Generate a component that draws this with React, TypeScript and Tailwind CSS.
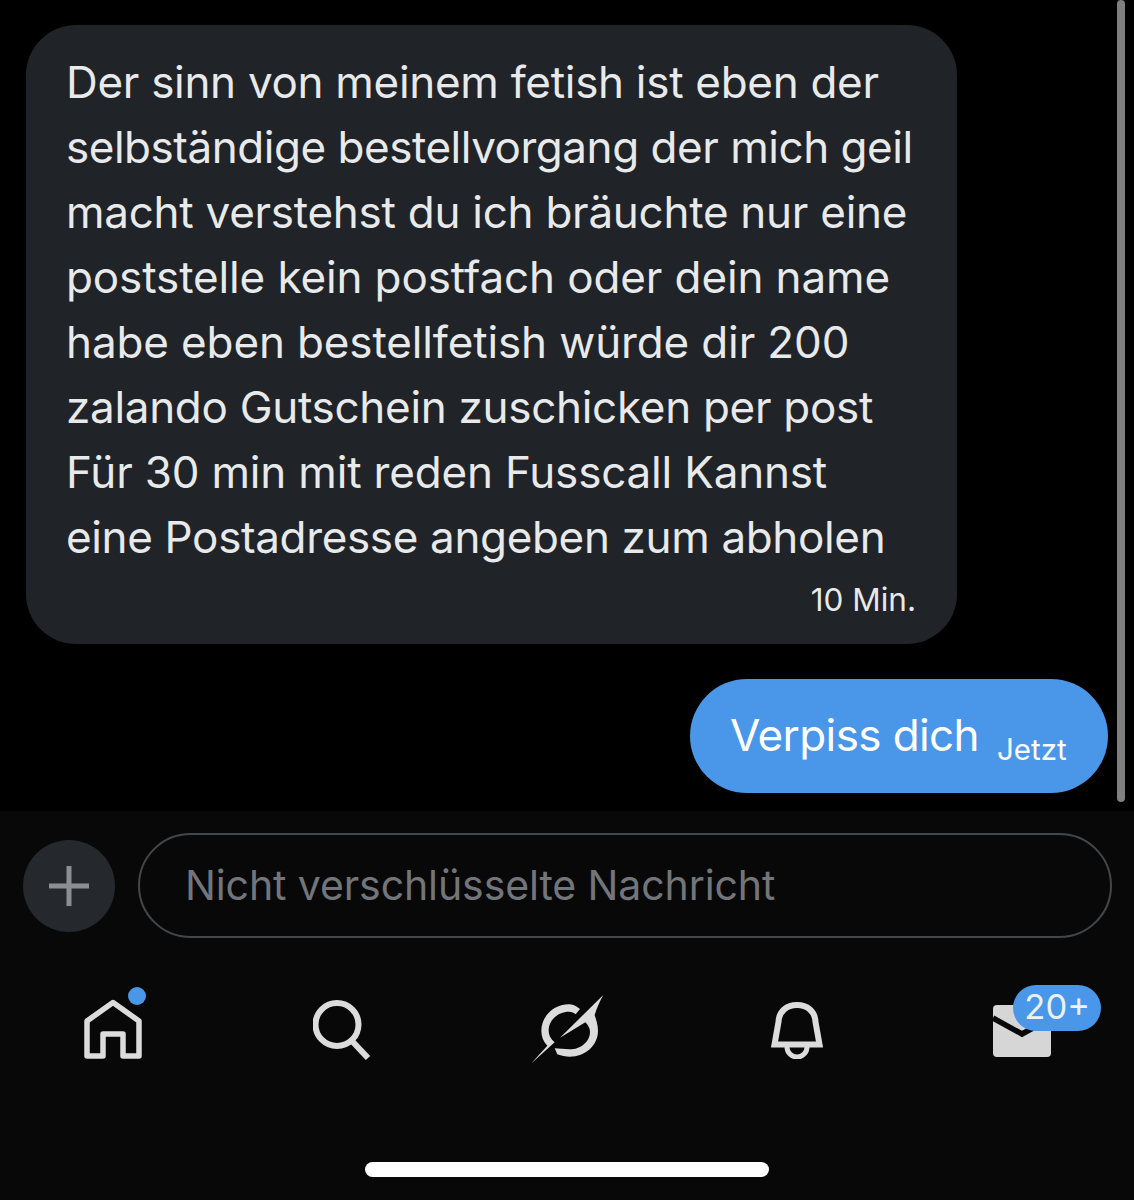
export default function App() {
  const lines = [
    { t: "Der sinn von meinem fetish ist eben der", c: "tracking-[-0.3px]" },
    { t: "selbständige bestellvorgang der mich geil", c: "tracking-[-0.47px]" },
    { t: "macht verstehst du ich bräuchte nur eine", c: "tracking-[-0.27px]" },
    { t: "poststelle kein postfach oder dein name", c: "tracking-[-0.12px]" },
    { t: "habe eben bestellfetish würde dir 200", c: "tracking-[-0.13px]" },
    { t: "zalando Gutschein zuschicken per post", c: "tracking-[-0.3px]" },
    { t: "Für 30 min mit reden Fusscall Kannst", c: "tracking-[-0.18px]" },
    { t: "eine Postadresse angeben zum abholen", c: "tracking-[-0.35px]" },
  ];
  return (
    <div className="relative flex h-[1200px] w-[1134px] flex-col overflow-hidden bg-black font-['Inter',sans-serif] text-[#e7e9ea]">
      <div className="absolute left-[1117px] top-0 h-[802px] w-[8px] rounded-full bg-[#7f7f7f]" />
      <main className="flex h-[811px] shrink-0 flex-col pl-[26px] pr-[26px] pt-[25px]">
        <div className="w-[931px] rounded-[50px] bg-[#202327] pl-[40px] pr-[41px] pt-[25px] pb-[24px]">
          {lines.map((l) => (
            <p key={l.t} className={`whitespace-nowrap text-[44px] leading-[65px] ${l.c}`}>{l.t}</p>
          ))}
          <p className="mt-[10px] text-right text-[31.5px] leading-[40px]">10 Min.</p>
        </div>
        <div className="mt-[35px] flex h-[114px] w-[418px] items-center self-end rounded-[57px] bg-[#4a96e8] pl-[40px] text-white">
          <span className="mt-[-2px] whitespace-nowrap text-[44px] leading-[65px] tracking-[-0.6px]">Verpiss dich</span>
          <span className="ml-[18px] mt-[26px] whitespace-nowrap text-[29.5px] leading-[36px]">Jetzt</span>
        </div>
      </main>
      <footer className="flex flex-1 flex-col bg-[#080808]">
        <div className="mt-[22px] flex items-center pl-[23px] pr-[22px]">
          <button className="flex h-[92px] w-[92px] shrink-0 items-center justify-center rounded-full bg-[#25292d]">
            <svg width="40" height="40" viewBox="0 0 40 40" fill="none" stroke="#8b8f93" strokeWidth="5">
              <path d="M20 0V40M0 20H40" />
            </svg>
          </button>
          <div className="ml-[23px] flex h-[105px] flex-1 items-center rounded-[53px] border-2 border-[#44474a] pl-[45px]">
            <span className="whitespace-nowrap text-[41px] tracking-[-0.1px] text-[#72767a]">Nicht verschlüsselte Nachricht</span>
          </div>
        </div>
        <nav className="mt-[52px] grid grid-cols-5">
          <div className="relative flex h-[80px] items-center justify-center">
            <svg width="58" height="60" viewBox="0 0 58 60" fill="none" stroke="#dcdcdc" strokeWidth="5.5" strokeLinejoin="round" className="mt-[-3px]">
              <path d="M29 3.5L55 22V57H39V35H19V57H3V22Z" />
            </svg>
            <span className="absolute left-[128px] top-[-3px] h-[18px] w-[18px] rounded-full bg-[#4a96e8]" />
          </div>
          <div className="flex h-[80px] items-center justify-center">
            <svg width="58" height="60" viewBox="0 0 58 60" fill="none" stroke="#dcdcdc" strokeWidth="6" className="ml-[3px] mt-[-1px]">
              <circle cx="24" cy="24.5" r="21.5" />
              <path d="M39 41L55 58" />
            </svg>
          </div>
          <div className="flex h-[80px] items-center justify-center">
            <svg width="71" height="69" viewBox="24 30 213 207" fill="#dcdcdc" className="ml-[1px] mt-[-1px]">
              <path d="M168 72C155 62 145 58 135 58C88 58 52 95 52 137C52 155 58 170 70 182L22 235L92 172C80 162 74 150 74 137C74 105 102 80 135 80C143 80 150 83 155 88Z" />
              <path d="M238 30L108 158L184 112C192 120 198 130 198 140C198 170 170 193 137 193C120 193 105 190 92 190L100 208C112 213 125 215 137 215C185 215 222 180 222 137C222 118 215 100 212 90C218 70 228 48 238 30Z" />
            </svg>
          </div>
          <div className="flex h-[80px] items-center justify-center">
            <svg width="52" height="57" viewBox="0 0 52 57" fill="none" stroke="#dcdcdc" className="ml-[6px] mt-[1px]">
              <path d="M3.5 42.5L7.5 20C8 9 16 3 26 3C36 3 44 9 44.5 20L48.5 42.5Z" strokeWidth="6" />
              <path d="M16 45A10 10 0 0 0 36 45" strokeWidth="5" />
            </svg>
          </div>
          <div className="relative flex h-[80px] items-center justify-center">
            <svg width="58" height="52" viewBox="0 0 58 52" className="ml-[3px] mt-[1px]">
              <rect width="58" height="52" rx="4" fill="#d6d6d6" />
              <path d="M0 13L29 29L58 13" fill="none" stroke="#080808" strokeWidth="5.5" />
            </svg>
            <span className="absolute left-[106px] top-[-5px] flex h-[46px] w-[88px] items-center justify-center rounded-[23px] bg-[#4a96e8] pb-[1px] text-[34.5px] leading-none text-[#eaf3fc]">20+</span>
          </div>
        </nav>
        <div className="mt-[92px] h-[15px] w-[404px] self-center rounded-full bg-white" />
      </footer>
    </div>
  );
}
